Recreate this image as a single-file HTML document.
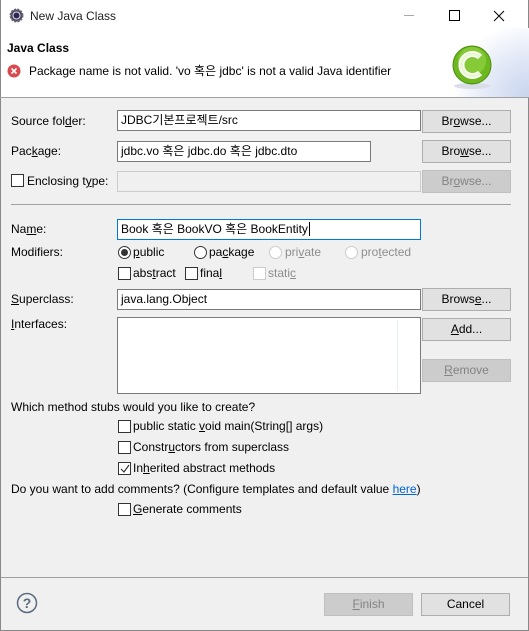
<!DOCTYPE html>
<html><head><meta charset="utf-8"><style>
*{margin:0;padding:0;box-sizing:border-box}
body{width:529px;height:631px;overflow:hidden;background:#f0f0f0;font-family:"Liberation Sans","Noto Sans CJK KR",sans-serif;font-size:12px;color:#000;position:relative}
.a{position:absolute;line-height:16px;white-space:nowrap}
.in{position:absolute;background:#fff;border:1px solid #7a7a7a;height:21px;line-height:19px;padding-left:3px;white-space:nowrap}
.bt{position:absolute;background:#e1e1e1;border:1px solid #adadad;height:23px;line-height:21px;text-align:center}
.dis{background:#cccccc;border-color:#bfbfbf;color:#838383}
.cb{position:absolute;width:13px;height:13px;border:1px solid #333;background:#fff}
.rb{position:absolute;width:13px;height:13px;border:1px solid #333;border-radius:50%;background:#fff}
.g{color:#8d8d8d}
u{text-decoration:underline}
</style></head><body>
<div style="position:absolute;left:0;top:0;width:529px;height:97px;background:#fff"></div>
<div style="position:absolute;left:0;top:0;width:1px;height:631px;background:#888"></div>
<div style="position:absolute;right:0;top:0;width:1px;height:631px;background:#888"></div>
<div style="position:absolute;left:0;bottom:0;width:529px;height:1px;background:#888"></div>
<div style="position:absolute;left:0;top:97px;width:529px;height:1px;background:#a0a0a0"></div>
<svg style="position:absolute;left:9px;top:8px" width="15" height="15" viewBox="0 0 15 15"><circle cx="7.5" cy="7.5" r="6" fill="#4a4070" stroke="#666" stroke-width="2" stroke-dasharray="2 1.2"/><circle cx="7.5" cy="7.5" r="3.5" fill="#2e2850" stroke="#ddd" stroke-width="1"/></svg>
<div class="a" style="left:30px;top:8px;color:#222">New Java Class</div>
<div style="position:absolute;left:404px;top:15px;width:10px;height:1px;background:#aaa"></div>
<div style="position:absolute;left:449px;top:10px;width:11px;height:11px;border:1px solid #000"></div>
<svg style="position:absolute;left:493px;top:10px" width="12" height="12"><path d="M1 1L11 11M11 1L1 11" stroke="#000" stroke-width="1"/></svg>
<div class="a" style="left:7px;top:40px;font-weight:bold">Java Class</div>
<svg style="position:absolute;left:7px;top:64px" width="14" height="14"><circle cx="7" cy="7" r="6.5" fill="#d9494e"/><path d="M4.5 4.5L9.5 9.5M9.5 4.5L4.5 9.5" stroke="#fff" stroke-width="1.6"/></svg>
<div class="a" style="left:29px;top:63px">Package name is not valid. 'vo 혹은 jdbc' is not a valid Java identifier</div>
<div style="position:absolute;left:445px;top:28px;width:84px;height:69px;background:radial-gradient(circle at 100% 100%,#c8d4ee 0,#e4eaf7 40%,#fff 70%)"></div>
<svg style="position:absolute;left:451px;top:44px" width="42" height="46"><ellipse cx="21" cy="42" rx="18" ry="3" fill="#d8dde8"/><circle cx="21" cy="21" r="19" fill="#6db81e" stroke="#4c8c10" stroke-width="1"/><circle cx="21" cy="17" r="14" fill="#9ad64a" opacity=".6"/><path d="M29 13a11 11 0 1 0 0 16" fill="none" stroke="#fff" stroke-width="6"/><path d="M29 13a11 11 0 1 0 0 16" fill="none" stroke="#e8f8d0" stroke-width="3"/></svg>

<div class="a" style="left:11px;top:113px">Source fol<u>d</u>er:</div>
<div class="in" style="left:117px;top:110px;width:304px">JDBC기본프로젝트/src</div>
<div class="bt" style="left:422px;top:110px;width:89px">Br<u>o</u>wse...</div>
<div class="a" style="left:11px;top:143px">Pac<u>k</u>age:</div>
<div class="in" style="left:117px;top:141px;width:254px">jdbc.vo 혹은 jdbc.do 혹은 jdbc.dto</div>
<div class="bt" style="left:422px;top:140px;width:89px">Bro<u>w</u>se...</div>
<div class="cb" style="left:11px;top:174px"></div>
<div class="a" style="left:27px;top:173px">Enclosing t<u>y</u>pe:</div>
<div class="in" style="left:117px;top:171px;width:304px;background:#f0f0f0;border-color:#ccc"></div>
<div class="bt dis" style="left:422px;top:170px;width:89px">Br<u>o</u>wse...</div>
<div style="position:absolute;left:11px;top:104px;width:0"></div>
<div style="position:absolute;left:11px;top:204px;width:500px;height:1px;background:#a0a0a0"></div>

<div class="a" style="left:11px;top:221px">Na<u>m</u>e:</div>
<div class="in" style="left:117px;top:219px;width:304px;border-color:#0078d7">Book 혹은 BookVO 혹은 BookEntity<span style="border-left:1px solid #000;margin-left:1px"></span></div>
<div class="a" style="left:11px;top:244px">Modifiers:</div>
<div class="rb" style="left:118px;top:246px"><div style="position:absolute;left:2px;top:2px;width:7px;height:7px;border-radius:50%;background:#333"></div></div>
<div class="a" style="left:133px;top:244px"><u>p</u>ublic</div>
<div class="rb" style="left:194px;top:246px"></div>
<div class="a" style="left:209px;top:244px">pa<u>c</u>kage</div>
<div class="rb" style="left:269px;top:246px;border-color:#ccc"></div>
<div class="a g" style="left:285px;top:244px">pri<u>v</u>ate</div>
<div class="rb" style="left:345px;top:246px;border-color:#ccc"></div>
<div class="a g" style="left:361px;top:244px">pro<u>t</u>ected</div>
<div class="cb" style="left:118px;top:267px"></div>
<div class="a" style="left:133px;top:265px">abs<u>t</u>ract</div>
<div class="cb" style="left:185px;top:267px"></div>
<div class="a" style="left:200px;top:265px">fina<u>l</u></div>
<div class="cb" style="left:253px;top:267px;border-color:#ccc"></div>
<div class="a g" style="left:268px;top:265px">stati<u>c</u></div>

<div class="a" style="left:11px;top:291px"><u>S</u>uperclass:</div>
<div class="in" style="left:117px;top:289px;width:304px">java.lang.Object</div>
<div class="bt" style="left:422px;top:288px;width:89px">Brows<u>e</u>...</div>
<div class="a" style="left:11px;top:316px"><u>I</u>nterfaces:</div>
<div class="in" style="left:117px;top:317px;width:304px;height:77px"><div style="position:absolute;left:279px;top:2px;width:1px;height:71px;background:#e8eef5"></div></div>
<div class="bt" style="left:422px;top:318px;width:89px"><u>A</u>dd...</div>
<div class="bt dis" style="left:422px;top:359px;width:89px"><u>R</u>emove</div>

<div class="a" style="left:11px;top:399px">Which method stubs would you like to create?</div>
<div class="cb" style="left:118px;top:420px"></div>
<div class="a" style="left:133px;top:418px">public static <u>v</u>oid main(String[] args)</div>
<div class="cb" style="left:118px;top:441px"></div>
<div class="a" style="left:133px;top:439px">Constr<u>u</u>ctors from superclass</div>
<div class="cb" style="left:118px;top:462px"><svg style="position:absolute;left:1px;top:1px" width="10" height="10"><path d="M1 5L4 8L9 1" fill="none" stroke="#333" stroke-width="1.2"/></svg></div>
<div class="a" style="left:133px;top:460px">In<u>h</u>erited abstract methods</div>
<div class="a" style="left:11px;top:481px">Do you want to add comments? (Configure templates and default value <span style="color:#0066cc;text-decoration:underline">here</span>)</div>
<div class="cb" style="left:118px;top:503px"></div>
<div class="a" style="left:133px;top:501px"><u>G</u>enerate comments</div>

<div style="position:absolute;left:1px;top:577px;width:527px;height:1px;background:#a0a0a0"></div>
<svg style="position:absolute;left:16px;top:592px" width="22" height="22"><circle cx="11" cy="11" r="9.5" fill="none" stroke="#5a6a80" stroke-width="1.5"/><text x="11" y="16" text-anchor="middle" font-family="Liberation Sans" font-weight="bold" font-size="14" fill="#5a6a80">?</text></svg>
<div class="bt dis" style="left:324px;top:593px;width:89px"><u>F</u>inish</div>
<div class="bt" style="left:421px;top:593px;width:89px">Cancel</div>
</body></html>
